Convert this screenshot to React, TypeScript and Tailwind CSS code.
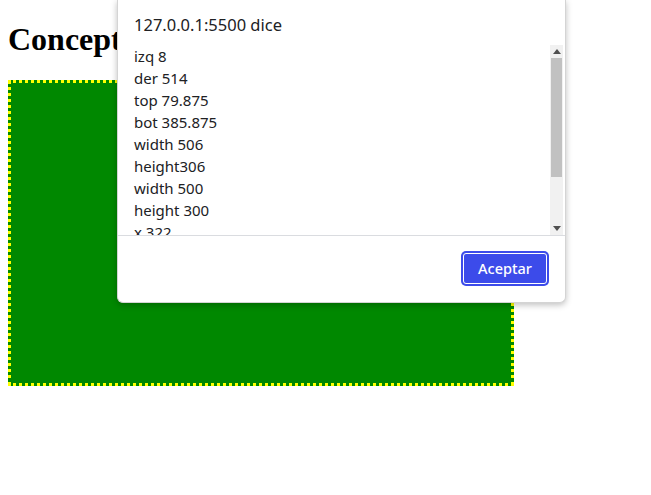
export default function App() {
  const lines = [
    "izq 8",
    "der 514",
    "top 79.875",
    "bot 385.875",
    "width 506",
    "height306",
    "width 500",
    "height 300",
    "x 322",
    "y 232.875",
  ];

  return (
    <div className="relative min-h-[495px] bg-white">
      <div className="px-2 pt-[21.44px]">
        <h1 className="mb-[21.44px] font-['Liberation_Serif',serif] text-[32px] font-bold leading-[37px] text-black">
          Conceptos de posición
        </h1>
        <div className="h-[306px] w-[506px] border-[3px] border-dotted border-[#ffff00] bg-[#008800]" />
      </div>

      {/* alert dialog */}
      <div className="absolute left-[117px] top-0 flex h-[303px] w-[449px] flex-col rounded-b-md border border-t-0 border-[#d4d4d4] bg-white font-['Noto_Sans',sans-serif] text-[#202124] shadow-[0_2px_6px_rgba(0,0,0,0.25)]">
        <div className="px-4 pt-[13px] pb-[8px] text-[16.5px] leading-[24px]">
          127.0.0.1:5500 dice
        </div>
        <div className="flex h-[191px] border-b border-[#dadce0]">
          <div className="flex-1 overflow-hidden pl-4 text-[15px] leading-[22px]">
            {lines.map((l, i) => (
              <div key={i}>{l}</div>
            ))}
          </div>
          <div className="mr-[2px] flex w-[13px] flex-col bg-[#f1f1f1]">
            <div className="flex h-[13px] items-center justify-center">
              <svg width="8" height="5" viewBox="0 0 8 5">
                <path d="M0 5 L4 0 L8 5 Z" fill="#505050" />
              </svg>
            </div>
            <div className="mx-[1px] h-[119px] bg-[#c1c1c1]" />
            <div className="flex-1" />
            <div className="flex h-[13px] items-center justify-center">
              <svg width="8" height="5" viewBox="0 0 8 5">
                <path d="M0 0 L4 5 L8 0 Z" fill="#505050" />
              </svg>
            </div>
          </div>
        </div>
        <div className="flex flex-1 items-start justify-end px-4 pt-[15px]">
          <button className="h-[35px] w-[88px] rounded-[5px] bg-[#3c4bea] p-[2px] text-[14.5px] font-medium text-white">
            <span className="flex h-full w-full items-center justify-center rounded-[3px] border border-white">
              Aceptar
            </span>
          </button>
        </div>
      </div>
    </div>
  );
}
